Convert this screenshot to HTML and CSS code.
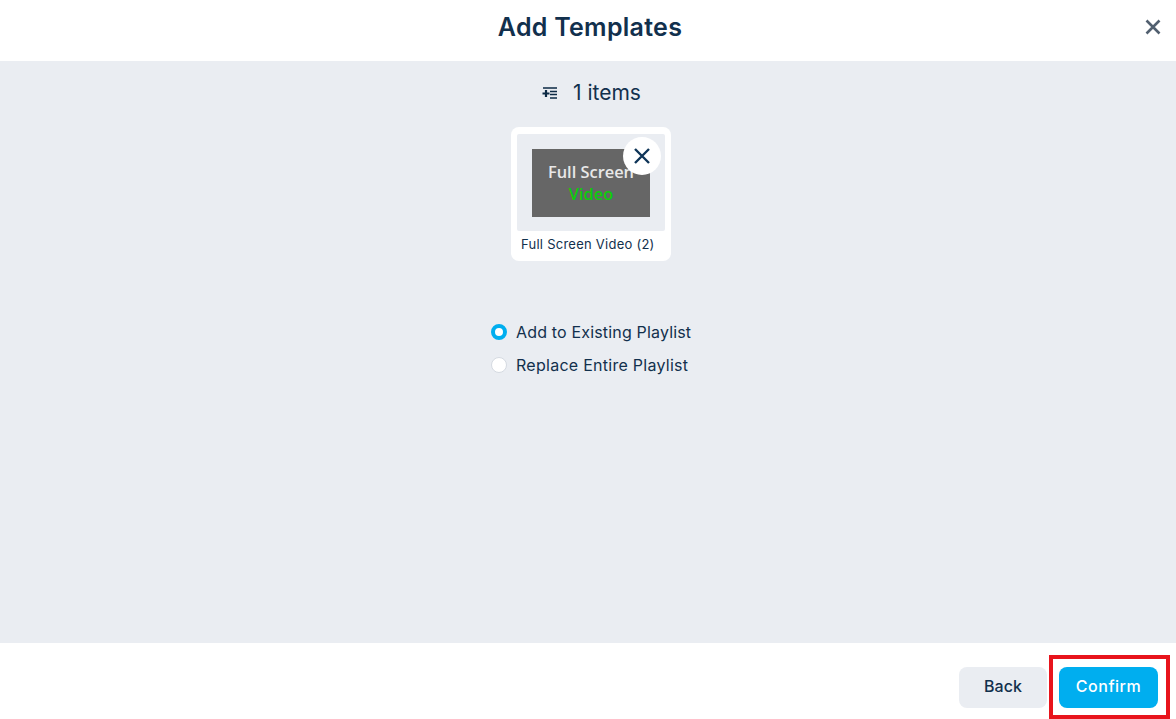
FILE: index.html
```html
<!DOCTYPE html>
<html lang="en">
<head>
<meta charset="utf-8">
<title>Add Templates</title>
<link rel="stylesheet" href="styles.css">
</head>
<body>
<div class="modal">
  <header class="header">
    <h1 class="title">Add Templates</h1>
    <button class="close" aria-label="Close">
      <svg width="16" height="16" viewBox="0 0 16 16"><path d="M1.5 1.5L14.5 14.5M14.5 1.5L1.5 14.5" stroke="#515f6f" stroke-width="2.6" fill="none"/></svg>
    </button>
  </header>
  <main class="main">
    <div class="count">
      <svg class="count-icon" width="16" height="14" viewBox="0 0 16 14"><path d="M1 2h14M8 5.5h7M8 8.5h7M8 12h7" stroke="#0d2a45" stroke-width="1.4" fill="none"/><path d="M0.5 7.5h7M4 4v7" stroke="#0d2a45" stroke-width="2.2" fill="none"/></svg>
      <span>1 items</span>
    </div>
    <div class="card">
      <div class="thumb">
        <div class="preview">
          <span class="preview-line">Full Screen</span>
          <span class="preview-line preview-green">Video</span>
        </div>
        <button class="remove" aria-label="Remove">
          <svg width="18" height="18" viewBox="0 0 18 18"><path d="M2 2L16 16M16 2L2 16" stroke="#0f3558" stroke-width="2.4" fill="none"/></svg>
        </button>
      </div>
      <div class="card-label">Full Screen Video (2)</div>
    </div>
    <div class="options">
      <label class="option"><span class="radio radio-on"></span>Add to Existing Playlist</label>
      <label class="option"><span class="radio"></span>Replace Entire Playlist</label>
    </div>
  </main>
  <footer class="footer">
    <button class="btn btn-back">Back</button>
    <button class="btn btn-confirm">Confirm</button>
    <div class="highlight"></div>
  </footer>
</div>
</body>
</html>
```
FILE: styles.css
```css
* { box-sizing: border-box; }
html, body { margin: 0; height: 100%; }
body { font-family: "Inter", "Liberation Sans", sans-serif; color: #12304d; background: #fff; overflow: hidden; }
.modal { display: flex; flex-direction: column; height: 719px; width: 1176px; }
.header { height: 61px; flex: none; display: flex; align-items: center; justify-content: center; position: relative; background: #fff; padding: 0 0 7px 4px; }
.title { margin: 0; font-size: 25px; font-weight: 600; color: #12304d; letter-spacing: 0.28px; }
.close { position: absolute; left: 1145px; top: 19px; width: 16px; height: 16px; padding: 0; border: 0; background: none; display: flex; }
.main { flex: 1; background: #eaedf2; display: flex; flex-direction: column; align-items: center; }
.count { height: 22px; margin: 20px 0 0 7px; display: flex; align-items: center; font-size: 21px; font-weight: 400; color: #12304d; }
.count-icon { margin-right: 15px; margin-top: 2px; }
.card { margin: 24px 0 0 6px; width: 160px; height: 134px; background: #fff; border-radius: 8px; padding: 7px 6px 0; }
.thumb { position: relative; height: 97px; background: #eaedf2; border-radius: 2px; display: flex; align-items: center; justify-content: center; }
.preview { width: 118px; height: 68px; background: #666; display: flex; flex-direction: column; align-items: center; justify-content: center; font-family: "Open Sans", sans-serif; font-size: 16.4px; font-weight: 600; line-height: 22px; color: #e8e8e8; padding-top: 1px; }
.preview-line { white-space: nowrap; }
.preview-green { color: #0ccc0c; }
.remove { position: absolute; right: 4px; top: 3px; width: 38px; height: 38px; border-radius: 50%; border: 0; padding: 0; background: #fff; display: flex; align-items: center; justify-content: center; }
.card-label { margin: 5px 0 0 4px; font-size: 13px; letter-spacing: 0.25px; line-height: 16px; color: #12304d; white-space: nowrap; }
.options { margin: 53px 0 0 6px; width: 200px; display: flex; flex-direction: column; gap: 11px; padding-top: 7px; }
.option { display: flex; align-items: center; height: 22px; font-size: 16px; letter-spacing: 0.17px; font-weight: 400; color: #12304d; white-space: nowrap; }
.option:last-child { letter-spacing: 0.27px; }
.radio { width: 16px; height: 16px; border-radius: 50%; background: #fff; border: 1px solid #d5dae1; margin-right: 9px; flex: none; }
.radio-on { background: #fff; border: 4.5px solid #00aeef; }
.footer { height: 76px; flex: none; background: #fff; display: flex; justify-content: flex-end; align-items: flex-start; padding: 24px 18px 0 0; gap: 12px; position: relative; }
.btn { height: 41px; border: 0; border-radius: 8px; font-family: inherit; font-size: 16px; font-weight: 500; padding: 0 0 4px; }
.btn-back { width: 88px; background: #eaedf2; color: #12304d; }
.btn-confirm { width: 99px; background: #00aeef; color: #fff; letter-spacing: 0.5px; }
.highlight { position: absolute; left: 1049px; top: 12px; width: 121px; height: 64px; border: 4px solid #e8141c; pointer-events: none; }
```
